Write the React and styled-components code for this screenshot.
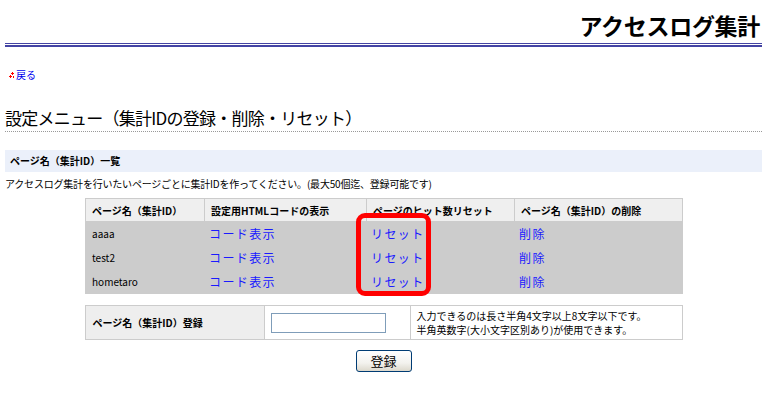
import React from 'react';
import styled, { createGlobalStyle } from 'styled-components';

const GlobalStyle = createGlobalStyle`
  html, body {
    margin: 0;
    padding: 0;
    background: #ffffff;
  }
  body {
    font-family: "Noto Sans CJK JP", "Noto Sans", sans-serif;
    color: #000000;
  }
`;

const Page = styled.div`
  width: 768px;
  padding: 0 6px 0 5px;
  box-sizing: border-box;
`;

const Header = styled.header`
  padding-top: 10px;
  padding-right: 2px;
  text-align: right;
`;

const SiteTitle = styled.h1`
  margin: 0;
  font-size: 23px;
  line-height: 30px;
  font-weight: 700;
  letter-spacing: -0.3px;
`;

const DoubleRule = styled.div`
  margin-top: 3px;
  height: 1px;
  border-top: 1px solid #4444a4;
  border-bottom: 2px solid #4444a4;
`;

const BackLink = styled.a`
  display: inline-flex;
  align-items: center;
  gap: 1px;
  margin: 22px 0 0 4px;
  font-size: 10px;
  line-height: 12px;
  color: #0000ee;
  text-decoration: none;
`;

const PageHeading = styled.h2`
  margin: 23px 0 0;
  padding-bottom: 2px;
  font-size: 17px;
  line-height: 22px;
  font-weight: 400;
  letter-spacing: -0.75px;
  border-bottom: 1px dotted #999999;
`;

const SectionBar = styled.div`
  margin-top: 18px;
  height: 22px;
  padding-left: 5px;
  background: #ebf0fa;
  font-size: 10px;
  font-weight: 700;
  line-height: 22px;
`;

const Description = styled.p`
  margin: 5px 0 0;
  font-size: 10px;
  line-height: 14px;
  letter-spacing: -0.2px;
`;

const TableWrap = styled.div`
  position: relative;
  width: 597px;
  margin: 7px auto 0;
`;

const ListTable = styled.table`
  width: 597px;
  border-collapse: collapse;
  table-layout: fixed;
  border: 1px solid #cccccc;
`;

const HeadCell = styled.th`
  height: 22px;
  padding: 0 6px;
  background: #efefef;
  border: 1px solid #cccccc;
  text-align: left;
  font-size: 10px;
  font-weight: 700;
  white-space: nowrap;
`;

const Cell = styled.td`
  height: 23px;
  padding: 0 ${p => (p.$link ? 4 : 6)}px;
  background: #cccccc;
  border: 1px solid #cccccc;
  font-size: ${p => (p.$link ? 12 : 10)}px;
  white-space: nowrap;
`;

const ActionLink = styled.a`
  color: #1a1aff;
  text-decoration: none;
  letter-spacing: 1.4px;
`;

const Highlight = styled.div`
  position: absolute;
  left: 271px;
  top: 15px;
  width: 75px;
  height: 83px;
  box-sizing: border-box;
  border: 5px solid #ff0000;
  border-radius: 9px;
  pointer-events: none;
`;

const RegisterTable = styled.table`
  width: 597px;
  margin: 11px auto 0;
  border-collapse: collapse;
  table-layout: fixed;
`;

const RegisterCell = styled.td`
  height: 33px;
  padding: 0 ${p => p.$pad || 6}px;
  border: 1px solid #cccccc;
  background: ${p => (p.$label ? '#eeeeee' : '#ffffff')};
  font-size: 10px;
  font-weight: ${p => (p.$label ? 700 : 400)};
  line-height: 12px;
  white-space: nowrap;
`;

const NoteLine = styled.span`
  display: block;
  line-height: 14px;
`;

const NameInput = styled.input`
  display: block;
  width: 115px;
  height: 20px;
  box-sizing: border-box;
  border: 1px solid #7f9db9;
  padding: 0 3px;
  font-size: 12px;
  font-family: inherit;
`;

const ButtonRow = styled.div`
  display: flex;
  justify-content: center;
  margin-top: 10px;
`;

const SubmitButton = styled.button`
  width: 56px;
  height: 22px;
  padding: 0;
  border: 1px solid #003c74;
  border-radius: 3px;
  background: linear-gradient(#ffffff 0%, #f3f2ee 60%, #dcd8cc 100%);
  font-family: inherit;
  font-size: 13px;
  line-height: 18px;
  color: #000000;
`;

function BackIcon() {
  return (
    <svg width="6" height="7" viewBox="0 0 6 7" style={{ marginTop: 1 }}>
      <g fill="#ff0000">
        <rect x="3" y="0" width="1" height="3" />
        <rect x="2" y="1" width="3" height="1" />
        <rect x="1" y="3" width="1" height="3" />
        <rect x="0" y="4" width="3" height="1" />
        <rect x="4" y="4" width="1" height="2" />
      </g>
    </svg>
  );
}

const pages = ['aaaa', 'test2', 'hometaro'];

export default function App() {
  return (
    <>
      <GlobalStyle />
      <Page>
        <Header>
          <SiteTitle>アクセスログ集計</SiteTitle>
        </Header>
        <DoubleRule />

        <BackLink href="#">
          <BackIcon />
          戻る
        </BackLink>

        <PageHeading>設定メニュー（集計IDの登録・削除・リセット）</PageHeading>

        <SectionBar>ページ名（集計ID）一覧</SectionBar>
        <Description>
          アクセスログ集計を行いたいページごとに集計IDを作ってください。(最大50個迄、登録可能です)
        </Description>

        <TableWrap>
          <ListTable>
            <colgroup>
              <col style={{ width: 119 }} />
              <col style={{ width: 162 }} />
              <col style={{ width: 148 }} />
              <col style={{ width: 168 }} />
            </colgroup>
            <thead>
              <tr>
                <HeadCell>ページ名（集計ID）</HeadCell>
                <HeadCell>設定用HTMLコードの表示</HeadCell>
                <HeadCell>ページのヒット数リセット</HeadCell>
                <HeadCell>ページ名（集計ID）の削除</HeadCell>
              </tr>
            </thead>
            <tbody>
              {pages.map(name => (
                <tr key={name}>
                  <Cell>{name}</Cell>
                  <Cell $link><ActionLink href="#">コード表示</ActionLink></Cell>
                  <Cell $link><ActionLink href="#">リセット</ActionLink></Cell>
                  <Cell $link><ActionLink href="#">削除</ActionLink></Cell>
                </tr>
              ))}
            </tbody>
          </ListTable>
          <Highlight />
        </TableWrap>

        <RegisterTable>
          <colgroup>
            <col style={{ width: 179 }} />
            <col style={{ width: 146 }} />
            <col style={{ width: 272 }} />
          </colgroup>
          <tbody>
            <tr>
              <RegisterCell $label $pad={7}>ページ名（集計ID）登録</RegisterCell>
              <RegisterCell><NameInput type="text" /></RegisterCell>
              <RegisterCell $pad={6}>
                <NoteLine>入力できるのは長さ半角4文字以上8文字以下です。</NoteLine>
                <NoteLine>半角英数字(大小文字区別あり)が使用できます。</NoteLine>
              </RegisterCell>
            </tr>
          </tbody>
        </RegisterTable>

        <ButtonRow>
          <SubmitButton type="button">登録</SubmitButton>
        </ButtonRow>
      </Page>
    </>
  );
}
